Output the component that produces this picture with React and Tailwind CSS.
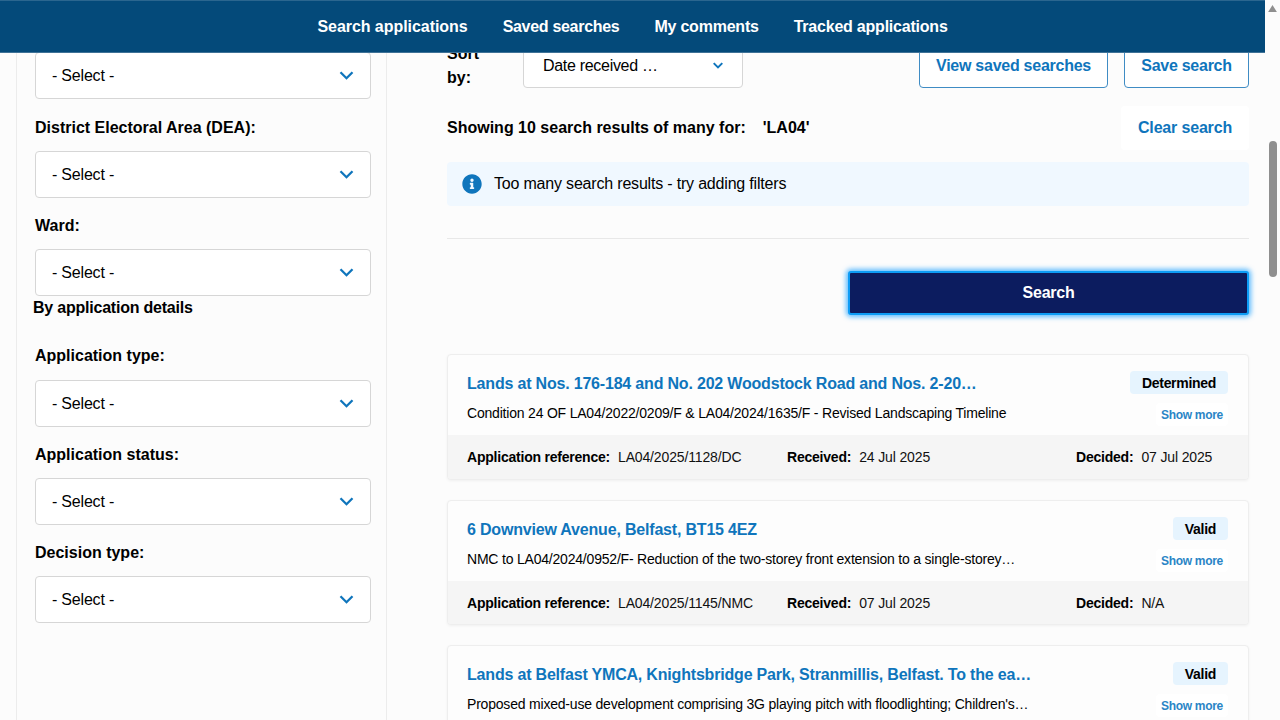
import { FaInfoCircle } from 'react-icons/fa';

const FONT = "font-['Liberation_Sans',Arial,sans-serif]";

function Chevron({ small }) {
  return (
    <svg
      viewBox="0 0 14 9"
      className={small ? 'w-[10px] h-[7px]' : 'w-[15px] h-[9px]'}
      fill="none"
      stroke="#0f75bc"
      strokeWidth={small ? 2.8 : 2.3}
    >
      <path d="M1 1.2 L7 7.2 L13 1.2" />
    </svg>
  );
}

function SelectBox() {
  return (
    <div className="h-[47px] w-[336px] flex items-center justify-between pl-[16px] pr-[16px] bg-white border border-[#d6d6d6] rounded-[4px] text-[16px] tracking-[-0.2px] text-black">
      <span>- Select -</span>
      <Chevron />
    </div>
  );
}

function Field({ label, tall }) {
  return (
    <div>
      <div className={`${tall ? 'h-[52px]' : 'h-[51px]'} pt-[16px] font-bold text-[16px] leading-[24px] text-black`}>
        {label}
      </div>
      <SelectBox />
    </div>
  );
}

function Sidebar() {
  return (
    <aside className="w-[371px] ml-[16px] h-[700px] shrink-0 -mt-px bg-[#fcfcfc] border-x border-[#ececec] pl-[18px]">
      <div className="mb-px">
        <SelectBox />
      </div>
      <Field label="District Electoral Area (DEA):" />
      <Field label="Ward:" />
      <div className="-ml-[2px] h-[32px] leading-[24px] font-bold text-[16px] tracking-[-0.22px] text-black">
        By application details
      </div>
      <Field label="Application type:" tall />
      <Field label="Application status:" />
      <Field label="Decision type:" />
    </aside>
  );
}

function Toolbar() {
  return (
    <div className="h-[35px] flex items-start">
      <div className="w-[76px] -mt-[11px] font-bold text-[16px] leading-[24px] text-black">
        Sort
        <br />
        by:
      </div>
      <div className="w-[220px] h-[47px] -mt-[12px] pt-[2px] flex items-center justify-between pl-[19px] pr-[19px] bg-white border border-[#d6d6d6] rounded-[4px] text-[16px] tracking-[-0.3px] text-black">
        <span>Date received …</span>
        <Chevron small />
      </div>
      <div className="ml-auto flex gap-[16px] -mt-[11px]">
        <div className="w-[189px] h-[46px] pt-[2px] flex items-center justify-center bg-white border border-[#3f8cc4] rounded-[4px] font-bold text-[16px] tracking-[-0.26px] text-[#0f75bc]">
          View saved searches
        </div>
        <div className="w-[125px] h-[46px] pt-[2px] flex items-center justify-center bg-white border border-[#3f8cc4] rounded-[4px] font-bold text-[16px] tracking-[-0.26px] text-[#0f75bc]">
          Save search
        </div>
      </div>
    </div>
  );
}

function AppCard({ title, description, status, reference, received, decided }) {
  return (
    <div className="h-[125.5px] bg-[#fdfdfd] border border-[#eeeeee] rounded-[4px] shadow-[0_1px_3px_rgba(0,0,0,0.05)] overflow-hidden flex flex-col">
      <div className="h-[80px] flex justify-between pl-[19px] pr-[20px] pt-[16px]">
        <div>
          <div className="mt-px font-bold text-[16px] leading-[24px] tracking-[-0.19px] text-[#0f75bc]">{title}</div>
          <div className="mt-[7px] text-[14px] leading-[20px] tracking-[-0.2px] text-black">{description}</div>
        </div>
        <div className="flex flex-col items-end">
          <div className="h-[23px] pt-[2px] px-[12px] flex items-center bg-[#e6f4fe] rounded-[4px] font-bold text-[14px] tracking-[-0.3px] text-black">
            {status}
          </div>
          <div className="mt-[9px] h-[23px] pt-px px-[5px] flex items-center bg-white rounded-[4px] font-bold text-[12px] tracking-[-0.3px] text-[#2a85c6]">
            Show more
          </div>
        </div>
      </div>
      <div className="flex-1 pt-[2px] bg-[#f5f5f5] flex items-center pl-[19px] text-[14px] tracking-[-0.14px] text-[#111111]">
        <div className="w-[320px]">
          <b className="text-black mr-[8px] tracking-[-0.22px]">Application reference:</b>
          {reference}
        </div>
        <div className="w-[289px]">
          <b className="text-black mr-[8px] tracking-[-0.22px]">Received:</b>
          {received}
        </div>
        <div>
          <b className="text-black mr-[8px] tracking-[-0.22px]">Decided:</b>
          {decided}
        </div>
      </div>
    </div>
  );
}

function Results() {
  return (
    <main className="w-[802px] ml-[60px] shrink-0">
      <Toolbar />
      <div className="h-[44px] mt-[18px] flex items-center justify-between">
        <div className="font-bold text-[16px] text-black">
          Showing 10 search results of many for:
          <span className="ml-[17px]">'LA04'</span>
        </div>
        <div className="w-[128px] h-[44px] flex items-center justify-center bg-white rounded-[4px] font-bold text-[16px] tracking-[-0.17px] text-[#0f75bc]">
          Clear search
        </div>
      </div>
      <div className="h-[44px] mt-[12px] pl-[15px] flex items-center gap-[12px] bg-[#f0f8ff] rounded-[4px] text-[16px] tracking-[-0.19px] text-black">
        <FaInfoCircle className="w-[20px] h-[20px] text-[#0f75bc]" />
        Too many search results - try adding filters
      </div>
      <div className="mt-[32px] border-t border-[#e8e8e8]" />
      <div className="mt-[32px] flex justify-end">
        <button className="w-[401px] h-[44px] bg-[#0c1c5f] border-2 border-[#0d9cf5] rounded-[3px] shadow-[0_0_5px_2px_rgba(40,165,255,0.75)] font-bold text-[16px] tracking-[-0.25px] text-white">
          Search
        </button>
      </div>
      <div className="mt-[39px] flex flex-col gap-[20px]">
        <AppCard
          title="Lands at Nos. 176-184 and No. 202 Woodstock Road and Nos. 2-20…"
          description="Condition 24 OF LA04/2022/0209/F & LA04/2024/1635/F - Revised Landscaping Timeline"
          status="Determined"
          reference="LA04/2025/1128/DC"
          received="24 Jul 2025"
          decided="07 Jul 2025"
        />
        <AppCard
          title="6 Downview Avenue, Belfast, BT15 4EZ"
          description="NMC to LA04/2024/0952/F- Reduction of the two-storey front extension to a single-storey…"
          status="Valid"
          reference="LA04/2025/1145/NMC"
          received="07 Jul 2025"
          decided="N/A"
        />
        <AppCard
          title="Lands at Belfast YMCA, Knightsbridge Park, Stranmillis, Belfast. To the ea…"
          description="Proposed mixed-use development comprising 3G playing pitch with floodlighting; Children's…"
          status="Valid"
          reference="LA04/2025/1101/F"
          received="01 Jul 2025"
          decided="N/A"
        />
      </div>
    </main>
  );
}

function Scrollbar() {
  return (
    <div className="w-[15px] shrink-0 bg-[#fcfcfc] flex flex-col items-center">
      <svg viewBox="0 0 10 8" className="w-[9px] h-[7px] mt-[5px]" fill="#8f8f8f">
        <path d="M5 0 L10 8 L0 8 Z" />
      </svg>
      <div className="w-[8px] h-[136px] mt-[129px] rounded-full bg-[#8f8f8f]" />
    </div>
  );
}

export default function App() {
  return (
    <div className={`${FONT} h-screen w-full flex overflow-hidden bg-[#fcfcfc]`}>
      <div className="flex-1 min-w-0 flex flex-col">
        <header className="relative z-10 h-[53px] shrink-0 bg-[#044a7a] border-t border-t-[#2b668f] border-b border-b-[#3f7297] flex items-center justify-center gap-[35px] font-bold text-[16px] text-white">
          <span className="tracking-[-0.05px]">Search applications</span>
          <span className="tracking-[-0.3px]">Saved searches</span>
          <span className="tracking-[-0.22px]">My comments</span>
          <span className="tracking-[-0.22px]">Tracked applications</span>
        </header>
        <div className="flex-1 flex overflow-hidden">
          <Sidebar />
          <Results />
        </div>
      </div>
      <Scrollbar />
    </div>
  );
}
